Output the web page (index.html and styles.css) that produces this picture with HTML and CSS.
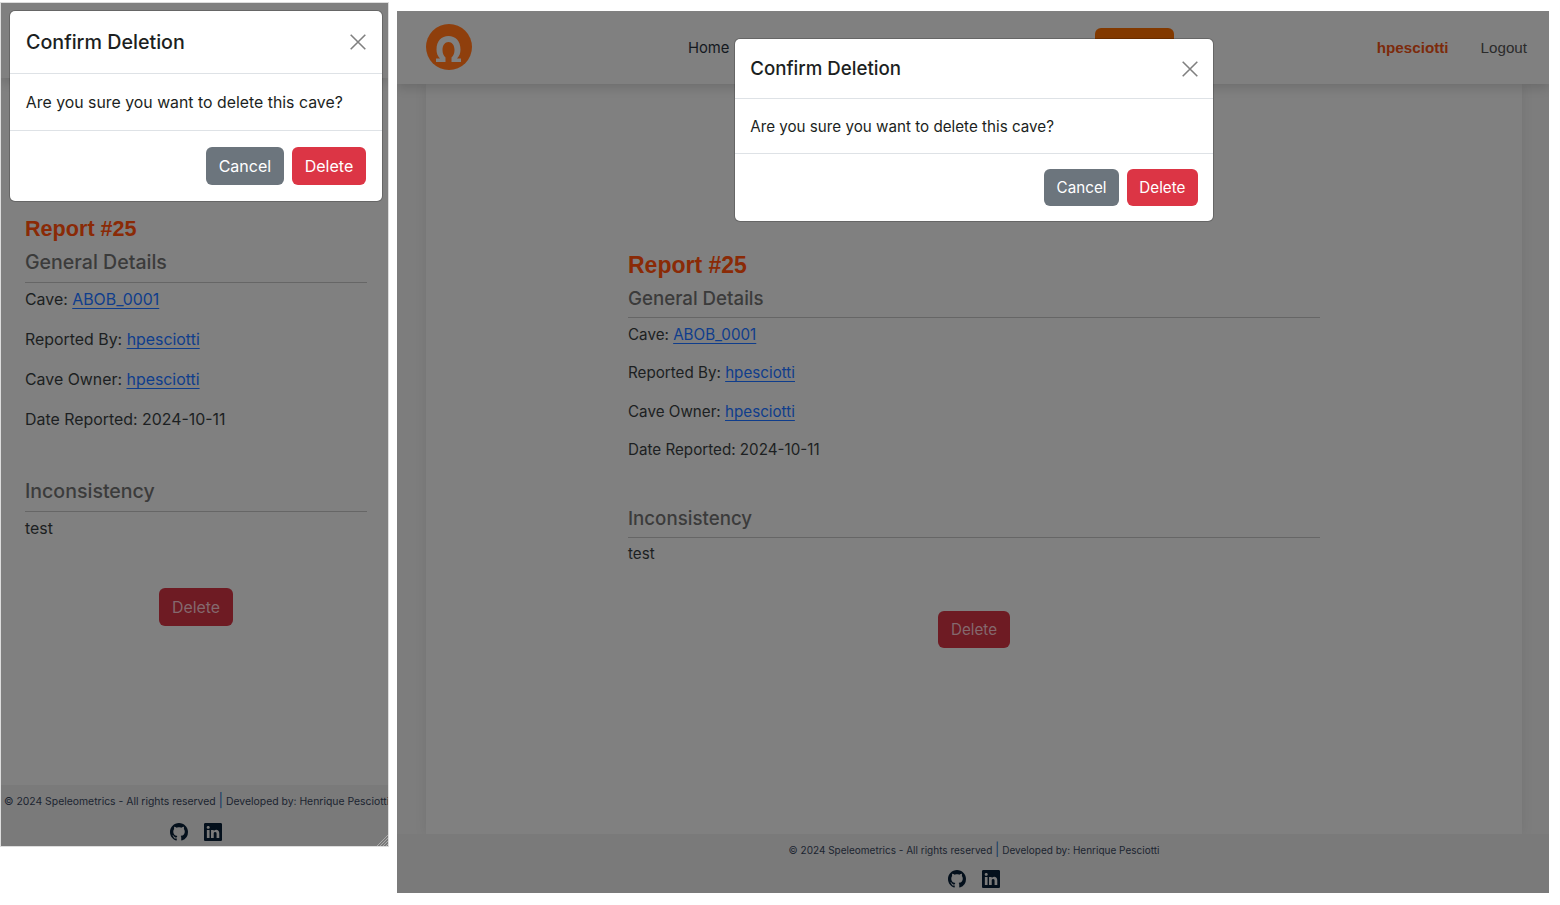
FILE: index.html
```html
<!DOCTYPE html>
<html lang="en">
<head>
  <meta charset="UTF-8" />
  <title>Speleometrics - Report #25</title>
  <link rel="stylesheet" href="styles.css">
</head>
<body>
  <svg class="icon-defs" aria-hidden="true">
    <symbol id="icon-github" viewBox="0 0 16 16"><path d="M8 0C3.58 0 0 3.58 0 8c0 3.54 2.29 6.53 5.47 7.59.4.07.55-.17.55-.38 0-.19-.01-.82-.01-1.49-2.01.37-2.53-.49-2.69-.94-.09-.23-.48-.94-.82-1.13-.28-.15-.68-.52-.01-.53.63-.01 1.08.58 1.23.82.72 1.21 1.87.87 2.33.66.07-.52.28-.87.51-1.07-1.78-.2-3.64-.89-3.64-3.95 0-.87.31-1.59.82-2.15-.08-.2-.36-1.02.08-2.12 0 0 .67-.21 2.2.82.64-.18 1.32-.27 2-.27s1.36.09 2 .27c1.53-1.04 2.2-.82 2.2-.82.44 1.1.16 1.92.08 2.12.51.56.82 1.27.82 2.15 0 3.07-1.87 3.75-3.65 3.95.29.25.54.73.54 1.48 0 1.07-.01 1.93-.01 2.2 0 .21.15.46.55.38A8.01 8.01 0 0 0 16 8c0-4.42-3.58-8-8-8"/></symbol>
    <symbol id="icon-linkedin" viewBox="0 0 16 16"><path d="M0 1.146C0 .513.526 0 1.175 0h13.65C15.474 0 16 .513 16 1.146v13.708c0 .633-.526 1.146-1.175 1.146H1.175C.526 16 0 15.487 0 14.854zm4.943 12.248V6.169H2.542v7.225zm-1.2-8.212c.837 0 1.358-.554 1.358-1.248-.015-.709-.52-1.248-1.342-1.248S2.4 3.226 2.4 3.934c0 .694.521 1.248 1.327 1.248zm4.908 8.212V9.359c0-.216.016-.432.08-.586.173-.431.568-.878 1.232-.878.869 0 1.216.662 1.216 1.634v3.865h2.401V9.25c0-2.22-1.184-3.252-2.764-3.252-1.274 0-1.845.7-2.165 1.193v.025h-.016l.016-.025V6.169h-2.4c.03.678 0 7.225 0 7.225z"/></symbol>
  </svg>

  <!-- Mobile view -->
  <section class="shot shot-mobile">
    <div class="topbar"></div>
    <main class="sheet">
      <div class="report">
        <h1>Report #25</h1>
        <h2>General Details</h2>
        <p>Cave: <a href="#">ABOB_0001</a></p>
        <p>Reported By: <a href="#">hpesciotti</a></p>
        <p>Cave Owner: <a href="#">hpesciotti</a></p>
        <p>Date Reported: 2024-10-11</p>
        <h2 class="second">Inconsistency</h2>
        <p>test</p>
        <div class="actions"><button class="btn btn-dim">Delete</button></div>
      </div>
    </main>
    <footer class="foot">
      <div class="foot-text">© 2024 Speleometrics - All rights reserved <span class="bar">|</span> Developed by: Henrique Pesciotti</div>
      <div class="foot-icons">
        <svg><use href="#icon-github"/></svg>
        <svg><use href="#icon-linkedin"/></svg>
      </div>
    </footer>
    <svg class="grip" viewBox="0 0 12 12"><path d="M12 1L1 12M12 4L4 12M12 7L7 12M12 10L10 12" stroke="#aaa" fill="none"/></svg>
    <div class="modal">
      <div class="modal-head">
        <h3>Confirm Deletion</h3>
        <svg class="close" viewBox="0 0 16 16"><path d="M1.5 1.5l13 13M14.5 1.5l-13 13" stroke="#808080" stroke-width="1.4" fill="none"/></svg>
      </div>
      <div class="modal-body">Are you sure you want to delete this cave?</div>
      <div class="modal-foot">
        <button class="btn btn-grey">Cancel</button>
        <button class="btn btn-red">Delete</button>
      </div>
    </div>
  </section>

  <!-- Desktop view -->
  <section class="shot shot-desktop">
    <nav class="topbar">
      <svg class="logo" viewBox="0 0 46 46">
        <circle cx="23" cy="23" r="23" fill="#8f3f0c"/>
        <path d="M10 38V34.500h4C11.500 32 10.500 29 10.500 25.500 10.500 17 15.500 12 22.500 12S34.500 17 34.500 25.500C34.500 29 33.500 32 31 34.500h4V38H25.500V33.500C27.500 32 28.500 29 28.500 26 28.500 21 26 18 22.500 18S16.500 21 16.500 26C16.500 29 17.500 32 19.500 33.500V38Z" fill="#808080"/>
      </svg>
      <a class="nav-link nav-home" href="#">Home</a>
      <span class="nav-pill"></span>
      <a class="nav-user" href="#">hpesciotti</a>
      <a class="nav-out" href="#">Logout</a>
    </nav>
    <main class="sheet">
      <div class="report">
        <h1>Report #25</h1>
        <h2>General Details</h2>
        <p>Cave: <a href="#">ABOB_0001</a></p>
        <p>Reported By: <a href="#">hpesciotti</a></p>
        <p>Cave Owner: <a href="#">hpesciotti</a></p>
        <p>Date Reported: 2024-10-11</p>
        <h2 class="second">Inconsistency</h2>
        <p>test</p>
        <div class="actions"><button class="btn btn-dim">Delete</button></div>
      </div>
    </main>
    <footer class="foot">
      <div class="foot-text">© 2024 Speleometrics - All rights reserved <span class="bar">|</span> Developed by: Henrique Pesciotti</div>
      <div class="foot-icons">
        <svg><use href="#icon-github"/></svg>
        <svg><use href="#icon-linkedin"/></svg>
      </div>
    </footer>
    <div class="modal">
      <div class="modal-head">
        <h3>Confirm Deletion</h3>
        <svg class="close" viewBox="0 0 16 16"><path d="M1.5 1.5l13 13M14.5 1.5l-13 13" stroke="#808080" stroke-width="1.4" fill="none"/></svg>
      </div>
      <div class="modal-body">Are you sure you want to delete this cave?</div>
      <div class="modal-foot">
        <button class="btn btn-grey">Cancel</button>
        <button class="btn btn-red">Delete</button>
      </div>
    </div>
  </section>
</body>
</html>
```

FILE: styles.css
```css
* {
  box-sizing: border-box;
}

html, body {
  height: 100%;
}

body {
  margin: 0;
  background: #fff;
  display: flex;
  align-items: flex-start;
  overflow: hidden;
  font-family: Inter, "Liberation Sans", sans-serif;
  color: #1c1f22;
}

.icon-defs {
  display: none;
}

/* The two views, both under the dark backdrop */
.shot {
  position: relative;
  display: flex;
  flex-direction: column;
  background: #7d7d7d;
  overflow: hidden;
}

.shot-mobile {
  width: 387px;
  height: 843px;
  margin: 3px 0 0 1px;
  font-size: 16px;
  box-shadow: 0 0 0 1px #ddd;
}

.shot-desktop {
  width: 1152px;
  height: 882px;
  margin: 11px 0 0 9px;
  font-size: 15.2px;
}

/* Top bar */
.topbar {
  flex: none;
  display: flex;
  align-items: center;
  background: #808080;
  box-shadow: 0 4px 10px rgba(0, 0, 0, 0.14);
  position: relative;
  z-index: 1;
}

.shot-mobile .topbar {
  height: 75px;
}

.shot-desktop .topbar {
  height: 73px;
  padding: 0 22px 0 29px;
}

.logo {
  width: 46px;
  height: 46px;
  margin-top: -2px;
}

.nav-home {
  margin-left: 216px;
  color: #14191f;
  text-decoration: none;
  font-family: Inter, sans-serif;
  font-size: 14.8px;
}

.nav-pill {
  width: 79px;
  height: 39px;
  margin-left: 366px;
  background: #823900;
  border-radius: 6px;
}

.nav-user {
  margin-left: auto;
  color: #7c2a0b;
  font-family: "Liberation Sans", sans-serif;
  font-size: 15.2px;
  font-weight: 700;
  text-decoration: none;
}

.nav-out {
  margin-left: 32px;
  color: #2b2b2b;
  font-family: "Liberation Sans", sans-serif;
  font-size: 15.2px;
  text-decoration: none;
}

/* Report */
.sheet {
  flex: 1;
  background: #808080;
}

.shot-desktop .sheet {
  margin: 0 27px 0 29px;
  box-shadow: 0 0 12px rgba(0, 0, 0, 0.08);
}

.shot-mobile .report {
  width: 342px;
  margin-left: 24px;
  padding-top: 138px;
  font-size: 15.9px;
}

.shot-desktop .report {
  width: 692px;
  margin: 0 auto;
  padding-top: 168px;
}

h1 {
  margin: 0 0 8px;
  font-family: "Liberation Sans", sans-serif;
  font-weight: 700;
  line-height: 1.2;
  color: #8a2a06;
}

.shot-mobile h1 {
  font-size: 21.6px;
  margin-bottom: 9px;
}

.shot-desktop h1 {
  font-size: 23px;
}

h2 {
  margin: 0 0 5px;
  padding-bottom: 8px;
  border-bottom: 1px solid #666;
  font-size: 1.23em;
  font-weight: 500;
  line-height: 1.2;
  color: #3b3b3b;
}

.shot-desktop h2 {
  margin-bottom: 6px;
  padding-bottom: 7px;
}

h2.second {
  margin-top: 2.5em;
}

.shot-mobile h2.second {
  margin-bottom: 5px;
  padding-bottom: 7px;
}

.shot-desktop h2.second {
  margin-bottom: 5px;
  padding-bottom: 6px;
}

p {
  margin: 0 0 1em;
  line-height: 1.5;
}

.shot-desktop p {
  margin-bottom: 1.02em;
}

p a {
  color: #0f3d8c;
  text-underline-offset: 3px;
}

.actions {
  display: flex;
  justify-content: center;
  margin-top: 3em;
}

/* Buttons */
.btn {
  height: 38px;
  padding: 0 0.8em;
  border: 0;
  border-radius: 6px;
  font-family: Inter, sans-serif;
  font-size: 1em;
}

.shot-desktop .btn {
  height: 37px;
  padding: 0 0.82em;
}

.shot-desktop .btn-dim {
  padding: 0 0.88em;
}

.btn-grey {
  background: #6c757d;
  color: #fff;
}

.btn-red {
  background: #dc3545;
  color: #fff;
}

.btn-dim {
  background: #6e1b23;
  color: #84696e;
}

/* Footer */
.foot {
  flex: none;
  background: #7a7a7a;
  text-align: center;
  color: #1b2430;
}

.shot-mobile .foot {
  height: 61px;
  padding: 8px 0 0 3px;
}

.shot-desktop .foot {
  height: 59px;
  padding: 8px 0 0 2px;
}

.foot-text {
  white-space: nowrap;
  font-size: 10.4px;
  line-height: 15px;
}

.shot-desktop .foot-text {
  font-size: 10px;
}

.bar {
  color: #123a66;
  font-size: 1.3em;
}

.foot-icons {
  display: flex;
  justify-content: center;
  gap: 16px;
  margin-top: 14px;
}

.shot-desktop .foot-icons {
  margin-top: 12px;
}

.foot-icons svg {
  width: 18px;
  height: 18px;
  fill: #04101c;
}

.grip {
  position: absolute;
  right: 0;
  bottom: 0;
  width: 12px;
  height: 12px;
}

/* Confirm dialog */
.modal {
  position: absolute;
  z-index: 5;
  background: #fff;
  border-radius: 5px;
  box-shadow: 0 0 0 1px rgba(0, 0, 0, 0.2);
}

.shot-mobile .modal {
  left: 9px;
  top: 8px;
  width: 372px;
}

.shot-desktop .modal {
  left: 338px;
  top: 28px;
  width: 478px;
}

.modal-head {
  display: flex;
  align-items: center;
  justify-content: space-between;
  padding: 0 15px 0 1em;
  border-bottom: 1px solid #dee2e6;
}

.shot-mobile .modal-head {
  height: 63px;
}

.shot-desktop .modal-head {
  height: 60px;
  padding-right: 14px;
}

h3 {
  margin: 0;
  font-size: 1.23em;
  font-weight: 500;
}

.close {
  width: 18px;
  height: 18px;
}

.modal-body {
  padding: 0 1em;
  display: flex;
  align-items: center;
  border-bottom: 1px solid #dee2e6;
}

.shot-mobile .modal-body {
  height: 57px;
  font-size: 15.85px;
}

.shot-desktop .modal-body {
  height: 55px;
}

.modal-foot {
  display: flex;
  justify-content: flex-end;
  gap: 8px;
  padding: 1em;
}
```
